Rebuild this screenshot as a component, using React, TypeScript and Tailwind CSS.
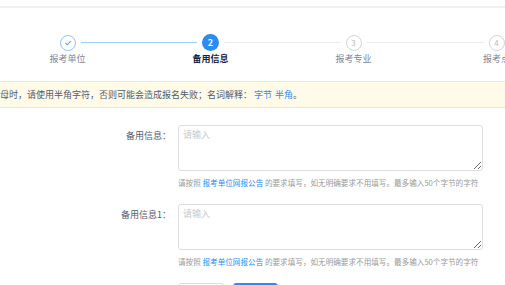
import React from 'react';

const steps = [
  { n: 1, label: '报考单位', state: 'done' },
  { n: 2, label: '备用信息', state: 'active' },
  { n: 3, label: '报考专业', state: 'wait' },
  { n: 4, label: '报考点', state: 'wait' },
];

const StepCircle = ({ n, state }: { n: number; state: string }) => {
  if (state === 'done') {
    return (
      <div className="w-[16px] h-[16px] rounded-full border border-[#8ec5f7] flex items-center justify-center bg-white shrink-0">
        <svg width="8" height="8" viewBox="0 0 10 10" fill="none">
          <path d="M2 5.2 L4.2 7.2 L8 3" stroke="#4fa3ef" strokeWidth="1.3" strokeLinecap="round" strokeLinejoin="round" />
        </svg>
      </div>
    );
  }
  if (state === 'active') {
    return (
      <div className="w-[17px] h-[17px] rounded-full bg-[#2d8cf0] flex items-center justify-center shrink-0 text-white text-[9px] font-semibold leading-none">
        {n}
      </div>
    );
  }
  return (
    <div className="w-[16px] h-[16px] rounded-full border border-[#d5d5d5] flex items-center justify-center bg-white shrink-0 text-[#b8b8b8] text-[8px] leading-none">
      {n}
    </div>
  );
};

const FormItem = ({ label }: { label: string }) => (
  <div className="flex">
    <div className="w-[171px] shrink-0 text-right pt-[5px] text-[9px] leading-[12px] text-[#515a6e] whitespace-nowrap">{label}</div>
    <div className="ml-[7px] w-[305px] shrink-0">
      <textarea
        placeholder="请输入"
        className="block w-[305px] h-[46px] border border-[#dcdee2] rounded-[3px] px-[4px] py-[3px] text-[9px] leading-[12px] text-[#515a6e] placeholder:text-[#c5c8ce] outline-none resize-y bg-white"
      />
      <div className="mt-[6px] text-[7.6px] leading-[12px] text-[#999] whitespace-nowrap">
        请按照 <span className="text-[#2d8cf0]">报考单位网报公告</span> 的要求填写，如无明确要求不用填写。最多输入50个字节的字符
      </div>
    </div>
  </div>
);

export default function App() {
  return (
    <div className="w-[505px] h-[285px] overflow-hidden bg-white" style={{ fontFamily: '"Noto Sans CJK SC", "Noto Sans", sans-serif' }}>
      <div className="h-[8px] border-b-2 border-[#f0f0f0]" />

      {/* steps */}
      <div className="flex ml-[-4px] mt-[26px]">
        {steps.map((s, i) => (
          <div key={s.n} className="w-[143px] shrink-0 flex flex-col items-center">
            <div className="w-full flex items-center h-[17px]">
              <div className={`flex-1 h-px mr-[5px] ${i === 0 ? '' : i === 1 ? 'bg-[#9ccffa]' : 'bg-[#e8eaec]'}`} />
              <StepCircle n={s.n} state={s.state} />
              <div className={`flex-1 h-px ml-[5px] ${i === 0 ? 'bg-[#9ccffa]' : 'bg-[#e8eaec]'}`} />
            </div>
            <div className={`mt-[2px] text-[9px] leading-[12px] whitespace-nowrap ${s.state === 'active' ? 'text-[#17233d] font-semibold' : 'text-[#808695]'}`}>
              {s.label}
            </div>
          </div>
        ))}
      </div>

      {/* alert */}
      <div className="mt-[16px] h-[27px] bg-[#fffbe8] border-y border-[#fde7a6] flex items-center whitespace-nowrap text-[9px] text-[#515a6e]">
        母时，请使用半角字符，否则可能会造成报名失败；名词解释：
        <span className="ml-[2px] text-[#2d8cf0]">字节</span>
        <span className="ml-[3px] text-[#2d8cf0]">半角</span>。
      </div>

      {/* form */}
      <div className="mt-[17px] flex flex-col gap-[15px]">
        <FormItem label="备用信息：" />
        <FormItem label="备用信息1：" />
        <div className="flex ml-[178px] gap-[9px]">
          <button className="w-[46px] h-[22px] border border-[#dcdee2] rounded-[3px] bg-white text-[9px] text-[#515a6e]">上一步</button>
          <button className="w-[45px] h-[22px] border border-[#2d8cf0] rounded-[3px] bg-[#2d8cf0] text-[9px] text-white">下一步</button>
        </div>
      </div>
    </div>
  );
}
